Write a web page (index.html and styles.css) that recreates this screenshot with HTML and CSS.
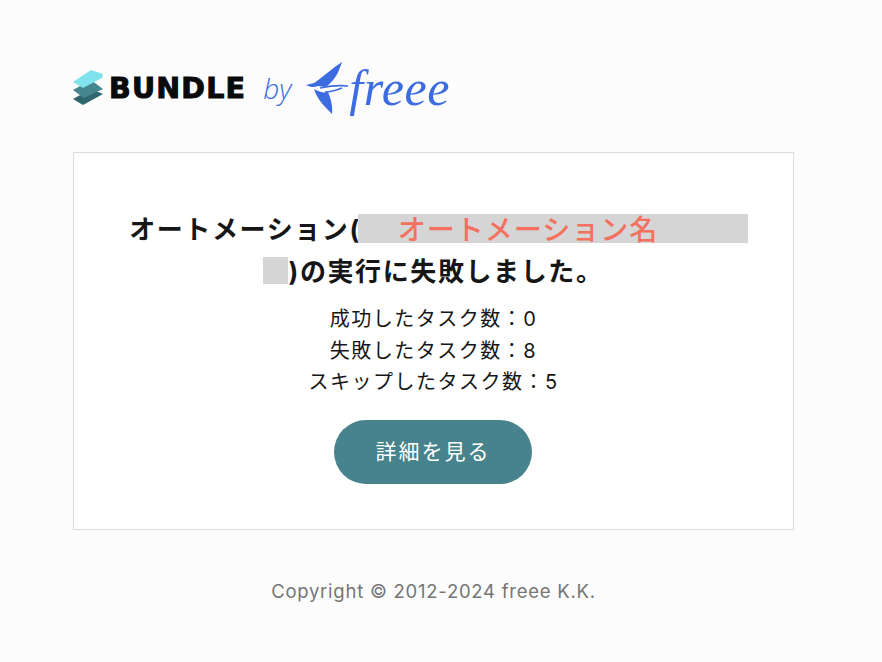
FILE: index.html
```html
<!DOCTYPE html>
<html lang="ja">
<head>
    <meta charset="UTF-8">
    <title>BUNDLE by freee</title>
    <link rel="stylesheet" href="styles.css">
</head>
<body>
    <div class="wrapper">
        <!-- ロゴ -->
        <header class="logo">
            <svg class="logo-stack" width="32" height="36" viewBox="0 0 32 36">
                <path fill="#2f666d" d="M0 29 L18 19 L30 24 L10 35 Z"/>
                <path fill="#45868f" d="M0 20 L18 10 L30 19 L11 28 Z"/>
                <path fill="#7fe2ec" d="M0 12 L18 0 L30 4 L29 8 L10 18 Z"/>
            </svg>
            <span class="logo-bundle">BUNDLE</span>
            <span class="logo-by">by</span>
            <svg class="logo-bird" width="44" height="54" viewBox="0 0 44 54">
                <path fill="#3d6be0" d="M1 24 L9 22 C17 17 26 8 37 1 C34 10 31 18 21 26 L13 25 C9 27 5 26 1 24 Z"/>
                <path fill="#3d6be0" d="M9 28 C14 31 19 32 23 31 C26 38 28 46 27 53 C20 46 12 38 9 28 Z"/>
                <path fill="none" stroke="#3d6be0" stroke-width="1.6" d="M15 27 C24 25 34 24 43 25 M20 31 C26 31 32 29 37 27"/>
            </svg>
            <span class="logo-freee">freee</span>
        </header>

        <!-- カード -->
        <main class="card">
            <h1 class="title">オートメーション(<span class="mask mask-name">オートメーション名</span><br><span class="mask mask-tail"></span>)の実行に失敗しました。</h1>
            <ul class="counts">
                <li>成功したタスク数：0</li>
                <li>失敗したタスク数：8</li>
                <li>スキップしたタスク数：5</li>
            </ul>
            <a class="button" href="#">詳細を見る</a>
        </main>

        <footer class="copyright">Copyright © 2012-2024 freee K.K.</footer>
    </div>
</body>
</html>
```
FILE: styles.css
```css
body {
    margin: 0;
    background-color: #fcfcfc;
    color: #161616;
    font-family: Inter, "Noto Sans CJK JP", sans-serif;
}

.wrapper {
    width: 721px;
    margin-left: 73px;
    padding-top: 61px;
}

/* ロゴ */
.logo {
    display: flex;
    align-items: center;
    height: 54px;
}

.logo-stack {
    margin-right: 4px;
}

.logo-bundle {
    font-family: "DejaVu Sans", sans-serif;
    font-size: 28.5px;
    font-weight: 700;
    color: #0a0a0a;
    letter-spacing: 1.2px;
    -webkit-text-stroke: 1px #0a0a0a;
}

.logo-by {
    margin: 0 14px 0 17px;
    font-family: "Open Sans", sans-serif;
    font-size: 28px;
    font-weight: 300;
    font-style: italic;
    color: #3d6be0;
}

.logo-freee {
    margin-left: 0;
    font-family: "Liberation Serif", serif;
    font-size: 50px;
    font-style: italic;
    line-height: 1;
    letter-spacing: 0.5px;
    color: #3d6be0;
}

/* カード */
.card {
    box-sizing: border-box;
    height: 378px;
    margin-top: 37px;
    padding-top: 56px;
    background-color: #ffffff;
    border: 1px solid #dcdcdc;
    text-align: center;
}

.title {
    margin: 0;
    font-size: 26px;
    font-weight: 700;
    line-height: 42px;
    letter-spacing: 1.6px;
}

.mask {
    display: inline-block;
    background-color: #d5d5d5;
}

.mask-name {
    box-sizing: border-box;
    width: 390px;
    height: 29px;
    margin: 0 -10px 0 -3px;
    padding-left: 40px;
    font-size: 28px;
    font-weight: 500;
    line-height: 32px;
    letter-spacing: 1px;
    color: #f4705f;
    text-align: left;
    vertical-align: -1px;
}

.mask-tail {
    width: 25px;
    height: 27px;
    vertical-align: -3px;
}

.counts {
    margin: 11px 0 0;
    padding: 0;
    list-style: none;
    font-size: 20px;
    line-height: 31.5px;
    letter-spacing: 1.5px;
}

.button {
    display: block;
    width: 198px;
    height: 64px;
    margin: 21px 0 0 260px;
    border-radius: 32px;
    background-color: #47838c;
    color: #ffffff;
    font-size: 21px;
    line-height: 64px;
    letter-spacing: 2px;
    text-decoration: none;
}

.copyright {
    margin-top: 50px;
    font-size: 18.5px;
    color: #757575;
    text-align: center;
    letter-spacing: 0.75px;
}
```
